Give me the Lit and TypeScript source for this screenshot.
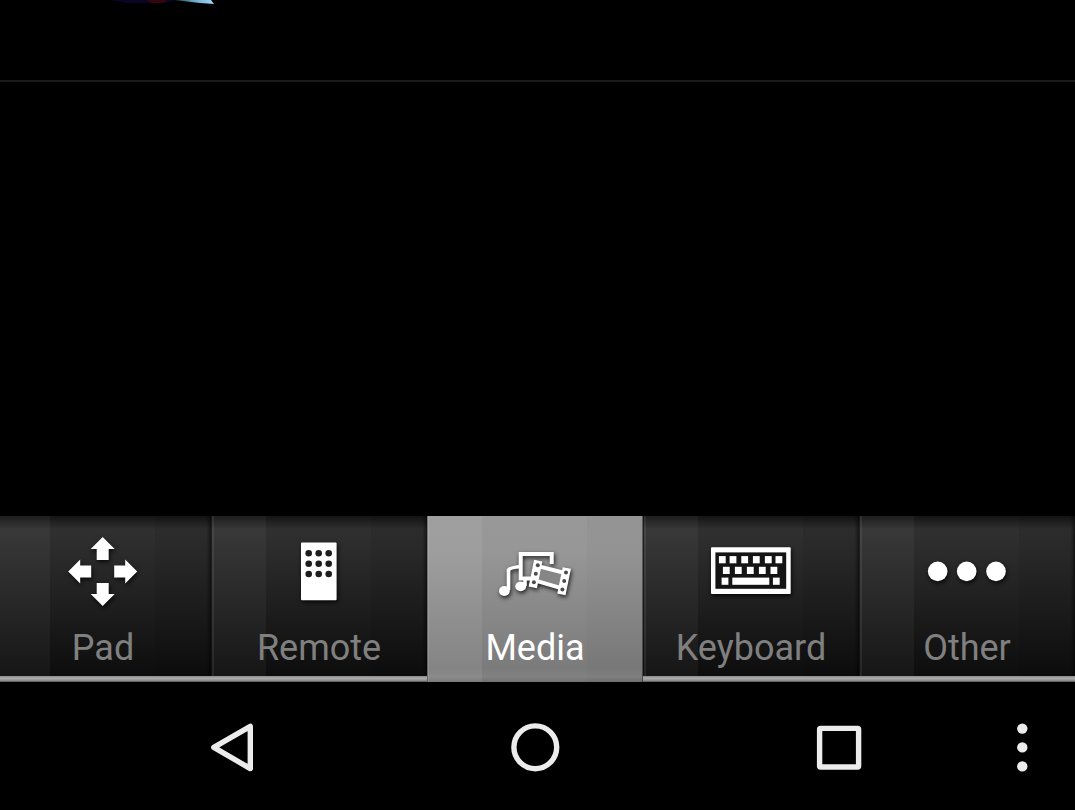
import { LitElement, html, css, svg } from "lit";
import { customElement, state } from "lit/decorators.js";

const arrow = "M47.7 14 59.7 26H53.7V37H41.7V26H35.7Z";

const padIcon = svg`${[0, 90, 180, 270].map(
  (angle) => svg`<path d=${arrow} transform="rotate(${angle} 47.7 48.5)" />`
)}`;

const remoteIcon = svg`
  <rect x="30" y="19.6" width="35.6" height="57.6" rx="1" />
  ${[30.3, 40.7, 51].map((y) =>
    [37.7, 47.7, 57.7].map((x) => svg`<circle cx=${x} cy=${y} r="3.3" fill="#1c1c1c" />`)
  )}`;

const mediaIcon = svg`
  <g fill="none" stroke="#fff" stroke-width="3.6">
    <path d="M21.5 67V47Q23 44.5 33.7 43.5" />
    <path d="M46 55.5H33.7V31H64.7V41" stroke-width="4" />
    <path d="M38 63V56" />
  </g>
  <ellipse cx="17.4" cy="68" rx="5.4" ry="4.9" />
  <ellipse cx="33.7" cy="63.4" rx="5.4" ry="4.9" />
  <path d="M51 42 78 48.5 74.5 67 47.5 58.5Z" fill="#868686" />
  <g fill="none" stroke="#fff">
    <path d="M51.2 37.6 45.8 64.4M79.8 45 74.4 71.4" stroke-width="8.4" />
    <path d="M52 43.4 78 50M48.5 57.6 75 65.4" stroke-width="4" />
  </g>
  <g fill="#4c4c4c">
    <circle cx="50.8" cy="42.3" r="2" />
    <circle cx="48.8" cy="50.8" r="2" />
    <circle cx="46.9" cy="59.2" r="2" />
    <circle cx="79" cy="49.6" r="2" />
    <circle cx="77.2" cy="58" r="2" />
    <circle cx="75.4" cy="66.4" r="2" />
  </g>`;

const key = (x: number, y: number) =>
  svg`<rect x=${x - 3.4} y=${y - 3.6} width="6.8" height="7.2" />`;

const keyboardIcon = svg`
  <rect x="8" y="24.3" width="79.7" height="46.6" rx="1" />
  <rect x="12.4" y="29.4" width="70.8" height="36.4" fill="#141414" />
  ${[19.3, 30, 41.7, 53.3, 65.3, 75.9].map((x) => key(x, 36.7))}
  ${[23.3, 35.3, 47.3, 59.3, 70.9].map((x) => key(x, 47.4))}
  ${[22, 73.3].map((x) => key(x, 58.2))}
  <rect x="29.3" y="54.6" width="37" height="7.2" />`;

const otherIcon = svg`${[18.7, 47.7, 77].map(
  (x) => svg`<circle cx=${x} cy="48.4" r="9.8" />`
)}`;

const tabs = [
  { label: "Pad", icon: padIcon },
  { label: "Remote", icon: remoteIcon },
  { label: "Media", icon: mediaIcon },
  { label: "Keyboard", icon: keyboardIcon },
  { label: "Other", icon: otherIcon },
];

@customElement("app-root")
export class AppRoot extends LitElement {
  @state() private active = "Media";

  static styles = css`
    :host {
      display: flex;
      flex-direction: column;
      min-height: 100vh;
      overflow: hidden;
      background: #000;
      color: #fff;
      font-family: Roboto, "Liberation Sans", sans-serif;
    }
    * {
      box-sizing: border-box;
    }
    button {
      margin: 0;
      padding: 0;
      border: 0;
      background: none;
      color: inherit;
      font: inherit;
      cursor: pointer;
    }
    svg {
      display: block;
    }
    .content {
      flex: 1;
    }
    .row {
      height: 82px;
      padding-left: 90px;
      border-bottom: 2px solid #1a1a1a;
    }
    .tabs {
      display: grid;
      grid-template-columns: repeat(5, 1fr);
      margin-left: -5px;
    }
    .tab {
      display: flex;
      flex-direction: column;
      align-items: center;
      gap: 8px;
      padding: 7px 0 13px;
      color: #808080;
      background:
        linear-gradient(#8c8c8c, #acacac 40%, #8a8a8a 80%, #4a4a4a) bottom / 100% 6px no-repeat,
        linear-gradient(90deg, #0006 0 1px, #ffffff12 1px 3px, #0000 3px 211px, #0004 214px, #0008),
        linear-gradient(90deg, #ffffff0a 0 55px, #0000 55px 160px, #00000014 160px),
        linear-gradient(#141414, #303030 8%, #2a2a2a 25%, #0d0d0d 96%);
    }
    .tab.active {
      color: #fff;
      background:
        linear-gradient(90deg, #0004 0 1px, #ffffff1c 1px 2px, #0000 2px 215px, #0006 215px),
        linear-gradient(90deg, #ffffff12 0 55px, #0000 55px 160px, #00000006 160px),
        linear-gradient(#989898, #979797 20%, #7b7b7b 92%, #828282 97%, #707070);
    }
    .icon {
      width: 96px;
      height: 96px;
      fill: #fff;
      filter: drop-shadow(1px 2px 2px #000c);
    }
    .label {
      font-size: 36px;
      line-height: 42px;
    }
    .system {
      display: grid;
      grid-template-columns: repeat(3, 1fr) 62px;
      height: 128px;
      padding: 0 22px 0 79px;
    }
    .system button {
      display: grid;
      place-items: center;
    }
    .glyph {
      width: 60px;
      height: 60px;
      fill: none;
      stroke: #ececec;
      stroke-width: 5.4;
      stroke-linejoin: round;
    }
    .dots {
      fill: #ececec;
      stroke: none;
    }
  `;

  render() {
    return html`
      <main class="content">
        <div class="row">
          <svg width="130" height="8" viewBox="0 0 130 8" aria-hidden="true">
            <defs>
              <linearGradient id="edge">
                <stop offset="0" stop-color="#123c40" />
                <stop offset="0.5" stop-color="#6da9cc" />
                <stop offset="1" stop-color="#a8d8fa" />
              </linearGradient>
            </defs>
            <path d="M20 0H86L76 3H36Z" fill="#0a0524" />
            <path d="M56 0H78L72 3H62Z" fill="#36060f" />
            <path d="M84 0H121L124 4 110 3Z" fill="url(#edge)" />
          </svg>
        </div>
      </main>
      <nav class="tabs" aria-label="Controls">
        ${tabs.map(
          (tab) => html`
            <button
              class="tab ${tab.label === this.active ? "active" : ""}"
              aria-pressed=${tab.label === this.active}
              @click=${() => (this.active = tab.label)}
            >
              <svg class="icon" viewBox="0 0 96 96" aria-hidden="true">${tab.icon}</svg>
              <span class="label">${tab.label}</span>
            </button>
          `
        )}
      </nav>
      <nav class="system" aria-label="System">
        <button aria-label="Back">
          <svg class="glyph" viewBox="0 0 60 60"><path d="M12.8 31.3 49.3 10.4V52.6Z" /></svg>
        </button>
        <button aria-label="Home">
          <svg class="glyph" viewBox="0 0 60 60"><circle cx="30.3" cy="31.3" r="21.4" /></svg>
        </button>
        <button aria-label="Recent apps">
          <svg class="glyph" viewBox="0 0 60 60"><rect x="10.6" y="12.4" width="39" height="38.6" rx="1" /></svg>
        </button>
        <button aria-label="Menu">
          <svg class="glyph dots" viewBox="0 0 60 60">
            <circle cx="30.3" cy="12.6" r="5.2" />
            <circle cx="30.3" cy="31.4" r="5.2" />
            <circle cx="30.3" cy="50.4" r="5.2" />
          </svg>
        </button>
      </nav>
    `;
  }
}
